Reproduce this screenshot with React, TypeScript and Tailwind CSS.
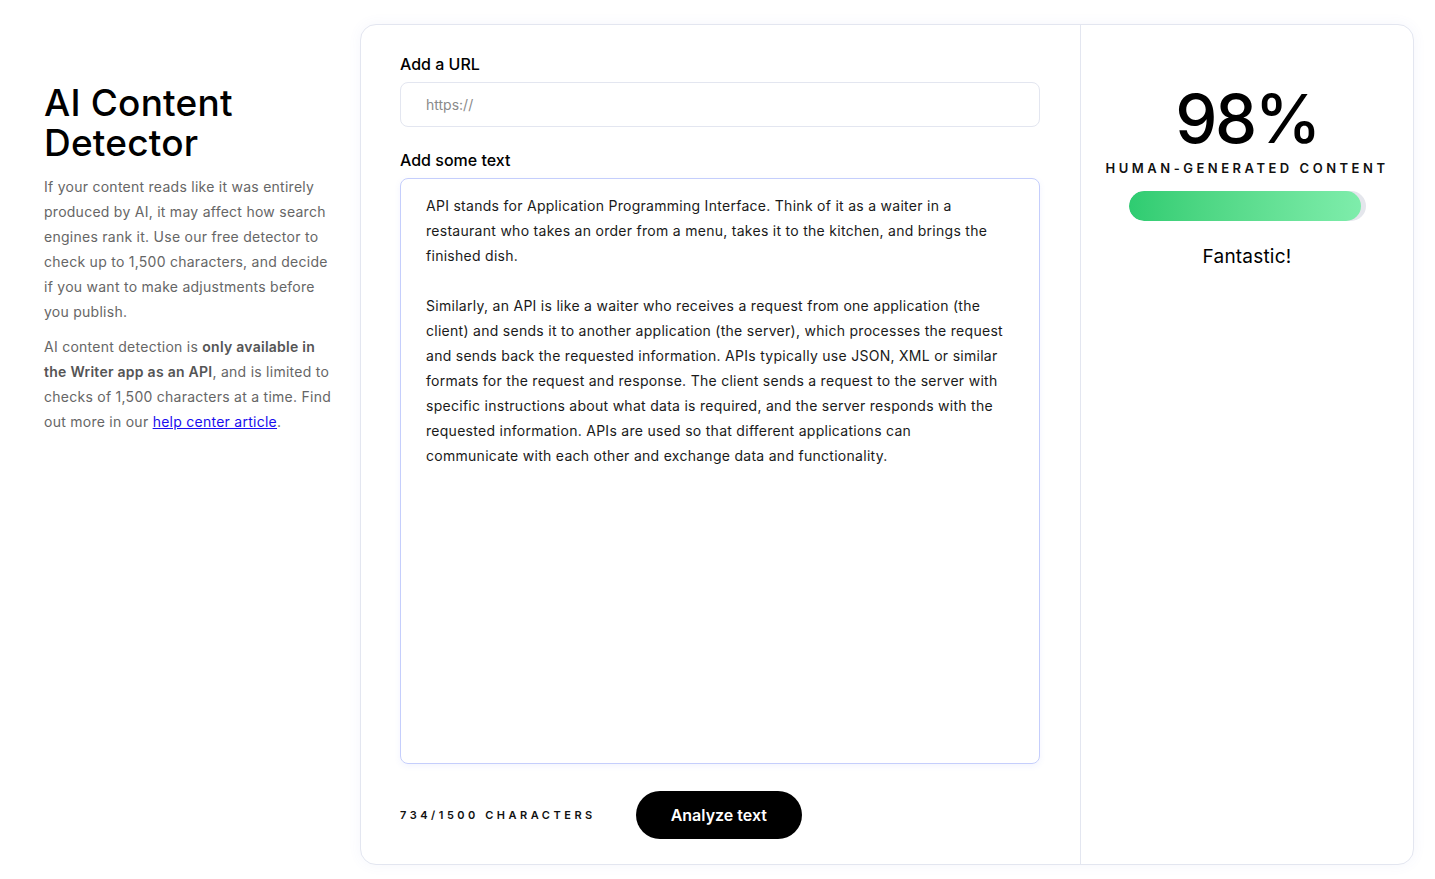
import { useState } from "react";

const SAMPLE =
  "API stands for Application Programming Interface. Think of it as a waiter in a\n" +
  "restaurant who takes an order from a menu, takes it to the kitchen, and brings the\n" +
  "finished dish.\n" +
  "\n" +
  "Similarly, an API is like a waiter who receives a request from one application (the\n" +
  "client) and sends it to another application (the server), which processes the request\n" +
  "and sends back the requested information. APIs typically use JSON, XML or similar\n" +
  "formats for the request and response. The client sends a request to the server with\n" +
  "specific instructions about what data is required, and the server responds with the\n" +
  "requested information. APIs are used so that different applications can\n" +
  "communicate with each other and exchange data and functionality.";

export default function App() {
  const [url, setUrl] = useState("");
  const [text, setText] = useState(SAMPLE);
  const score = 98;

  return (
    <div
      className="min-h-screen bg-white flex items-start gap-6 pl-11 pr-[21px] pt-6 text-black"
      style={{ fontFamily: "Inter, 'Open Sans', sans-serif" }}
    >
      {/* intro column */}
      <div className="w-[292px] shrink-0 pt-[59px]">
        <h1 className="text-[37px] leading-[40px] font-medium tracking-[0.2px]">
          <span className="block">AI Content</span>
          <span className="block">Detector</span>
        </h1>
        <p className="mt-[11px] text-[14px] leading-[25px] tracking-[0.26px] text-[#666]">
          If your content reads like it was entirely
          <br />
          produced by AI, it may affect how search
          <br />
          engines rank it. Use our free detector to
          <br />
          check up to 1,500 characters, and decide
          <br />
          if you want to make adjustments before
          <br />
          you publish.
        </p>
        <p className="mt-[10px] text-[14px] leading-[25px] tracking-[0.26px] text-[#666]">
          AI content detection is <b className="font-semibold text-[#555]">only available in</b>
          <br />
          <b className="font-semibold text-[#555]">the Writer app as an API</b>, and is limited to
          <br />
          checks of 1,500 characters at a time. Find
          <br />
          out more in our{" "}
          <a href="#" className="text-[#1a0dee] underline">
            help center article
          </a>
          .
        </p>
      </div>

      {/* tool card */}
      <div className="flex-1 h-[841px] flex rounded-2xl border border-[#e3e6f0] bg-white shadow-[0_0_14px_rgba(90,100,200,0.06)]">
        <div className="w-[720px] shrink-0 border-r border-[#e3e6f0] pl-[39px] pr-[40px] pt-[28px] flex flex-col">
          <label className="text-[16px] leading-[22px] font-medium">Add a URL</label>
          <input
            value={url}
            onChange={(e) => setUrl(e.target.value)}
            placeholder="https://"
            className="mt-[7px] h-[45px] w-full rounded-lg border border-[#e3e6f0] px-[25px] text-[14px] placeholder:text-[#8a8a8a] outline-none"
          />
          <label className="mt-[22px] text-[16px] leading-[22px] font-medium">Add some text</label>
          <textarea
            value={text}
            onChange={(e) => setText(e.target.value)}
            wrap="off"
            className="mt-[7px] h-[586px] w-full resize-none overflow-hidden rounded-lg border border-[#c5cefc] px-[25px] pt-[14px] text-[14px] leading-[25px] tracking-[0.28px] text-[#1a1a1a] outline-none shadow-[0_2px_6px_rgba(90,110,240,0.08)]"
          />
          <div className="mt-[27px] flex items-center gap-10">
            <span className="text-[11px] font-semibold tracking-[0.32em] text-[#111]">
              {text.length}/1500 CHARACTERS
            </span>
            <button className="h-12 w-[166px] rounded-full bg-black text-white text-[16px] font-semibold">
              Analyze text
            </button>
          </div>
        </div>

        <div className="flex-1 flex flex-col items-center pt-[52px]">
          <div className="text-[67px] leading-[84px] font-medium tracking-[-2.5px]">{score}%</div>
          <div className="mt-[-2px] text-[13px] font-semibold tracking-[0.27em] text-[#111]">
            HUMAN-GENERATED CONTENT
          </div>
          <div className="mt-[12px] h-[30px] w-[237px] rounded-full bg-[#e4e6ec] overflow-hidden">
            <div
              className="h-full rounded-full bg-gradient-to-r from-[#2ecc71] to-[#7eedab]"
              style={{ width: `${score}%` }}
            />
          </div>
          <div className="mt-[24px] text-[19px] leading-6 tracking-[0.2px]">Fantastic!</div>
        </div>
      </div>
    </div>
  );
}
